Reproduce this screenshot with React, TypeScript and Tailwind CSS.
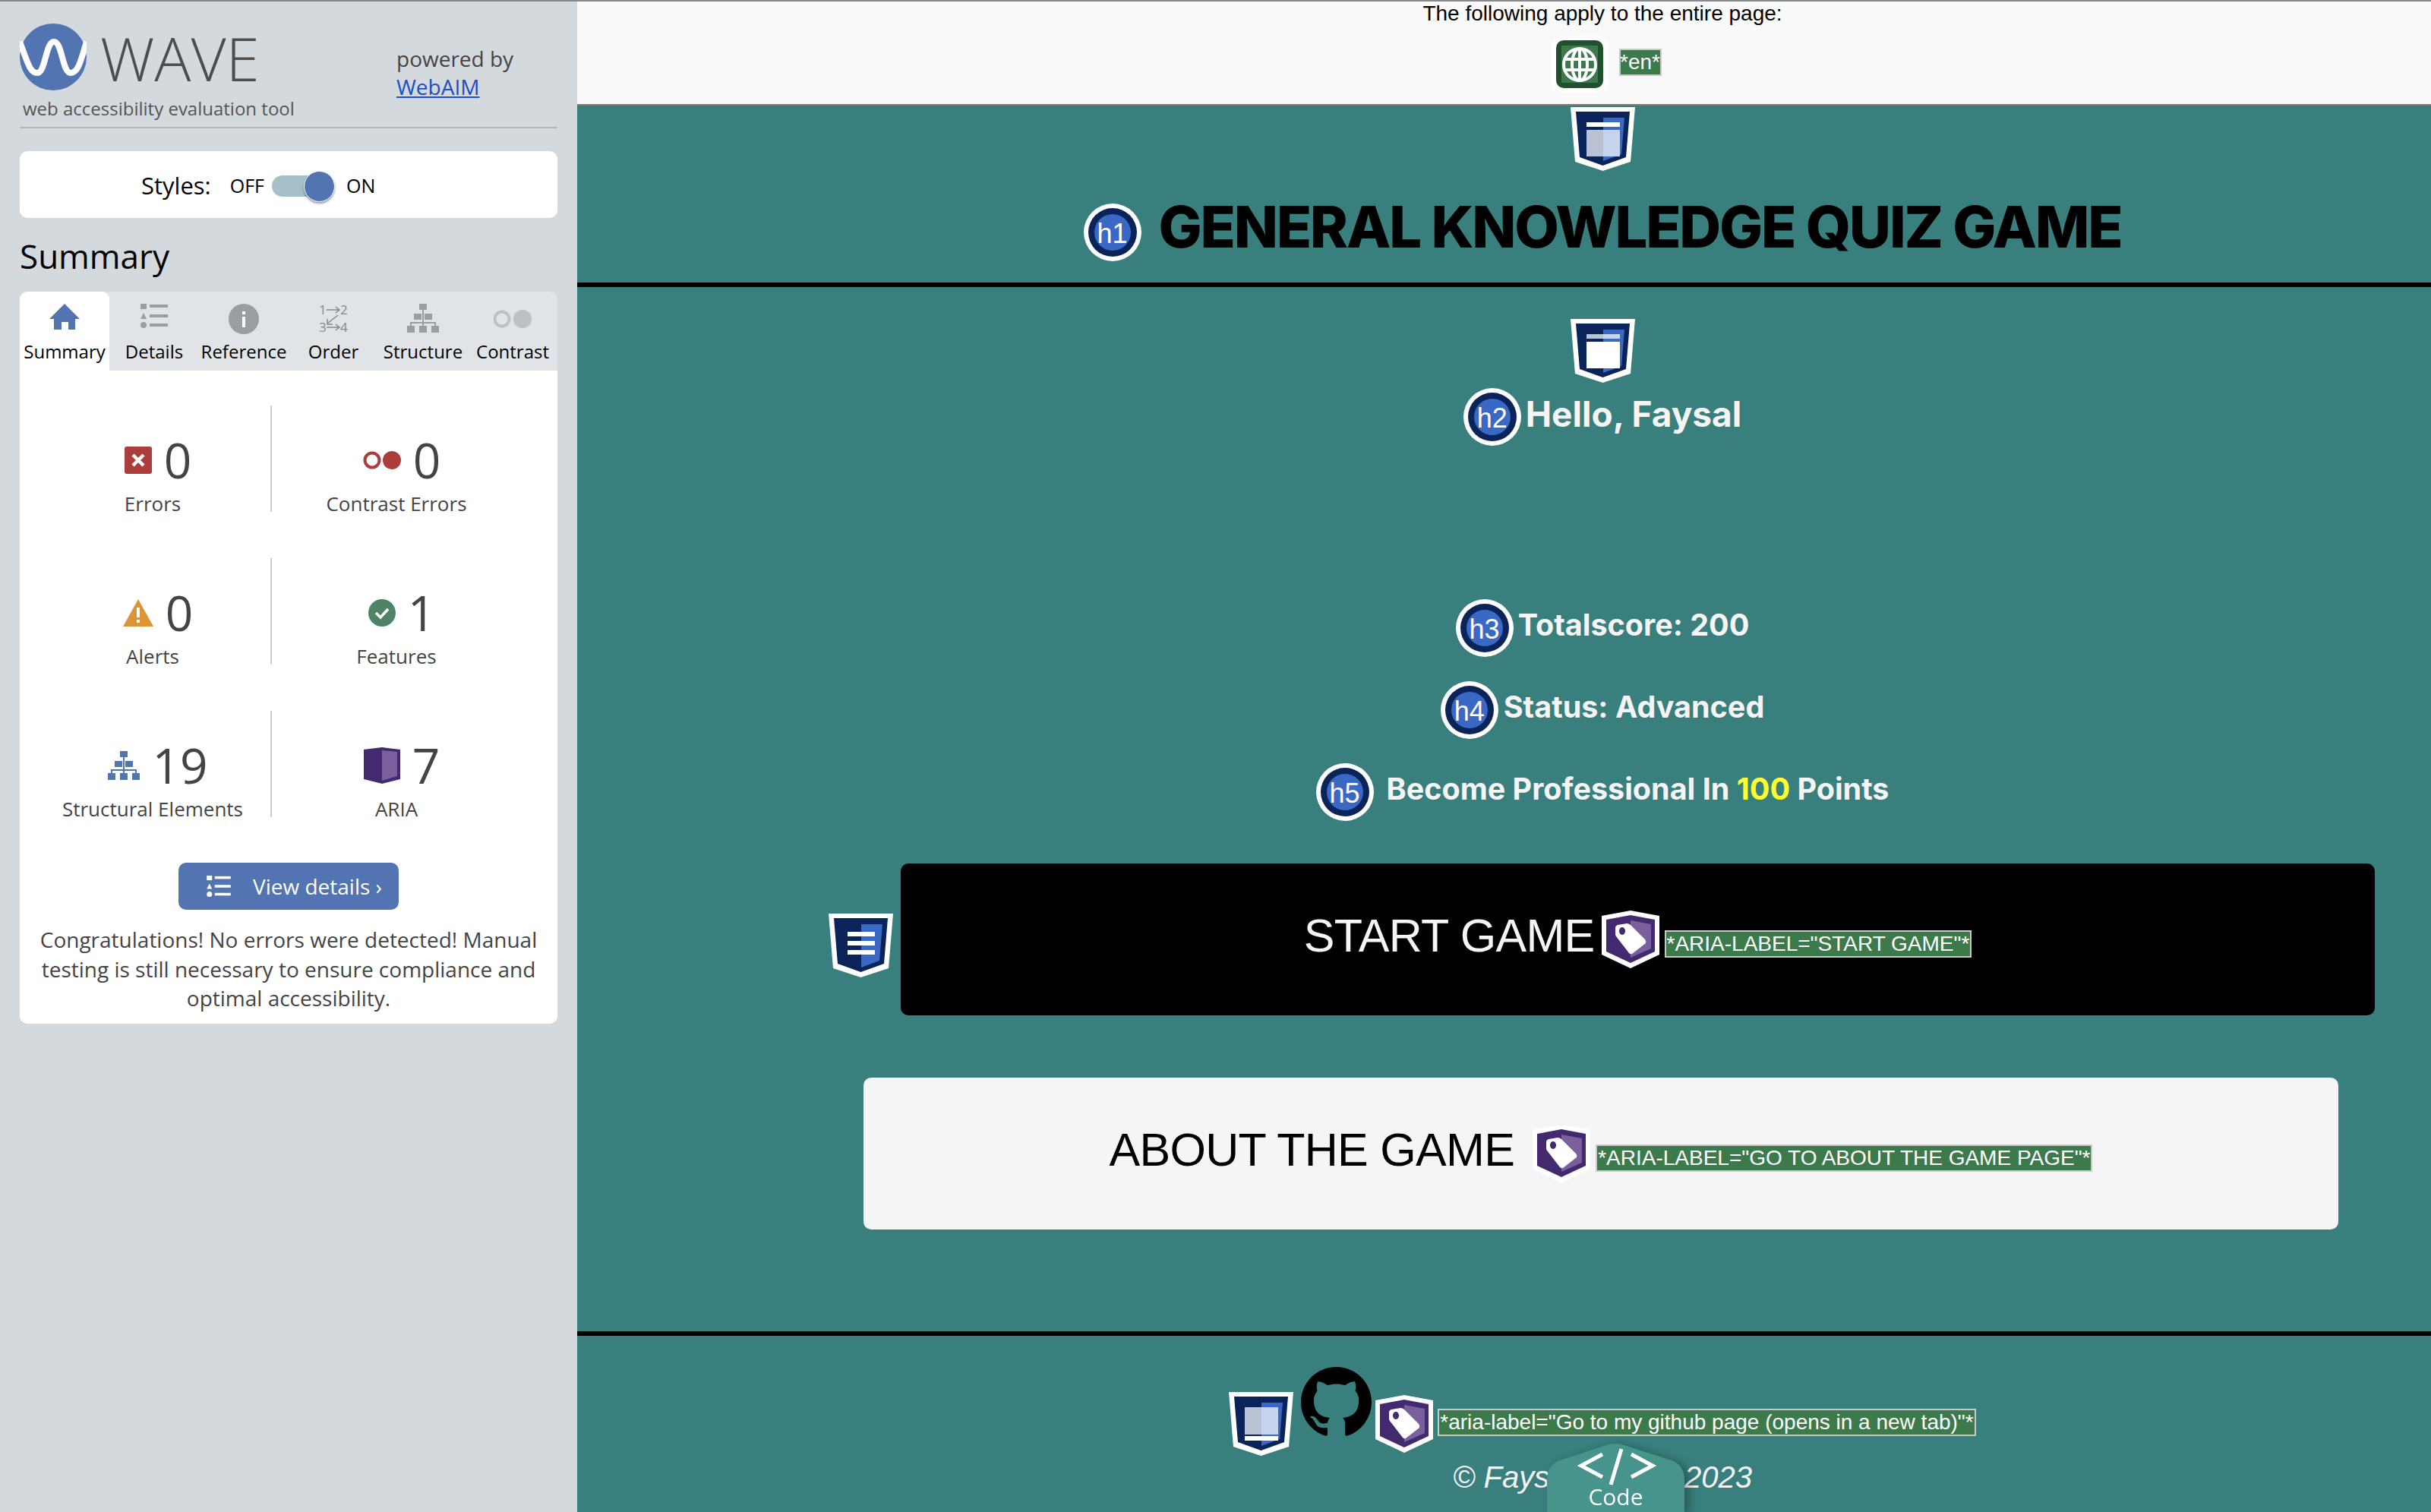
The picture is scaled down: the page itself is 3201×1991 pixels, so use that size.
import { BsGithub } from 'react-icons/bs';

const STATS = [
  { icon: 'error', value: '0', label: 'Errors' },
  { icon: 'contrast', value: '0', label: 'Contrast Errors' },
  { icon: 'alert', value: '0', label: 'Alerts' },
  { icon: 'feature', value: '1', label: 'Features' },
  { icon: 'structure', value: '19', label: 'Structural Elements' },
  { icon: 'aria', value: '7', label: 'ARIA' },
];

function StructureGlyph({ className, fill }: { className: string; fill: string }) {
  return (
    <svg className={className} viewBox="0 0 42 38" fill={fill}>
      <rect x="16" y="0" width="10" height="8" />
      <rect x="9" y="13" width="10" height="8" />
      <rect x="23" y="13" width="10" height="8" />
      <rect x="0" y="29" width="10" height="9" />
      <rect x="16" y="29" width="10" height="9" />
      <rect x="32" y="29" width="10" height="9" />
      <rect x="20" y="8" width="2" height="21" />
      <rect x="5" y="24" width="32" height="2" />
      <rect x="4" y="24" width="2" height="5" />
      <rect x="36" y="24" width="2" height="5" />
    </svg>
  );
}

function ListGlyph({ className, fill }: { className: string; fill: string }) {
  return (
    <svg className={className} viewBox="0 0 36 32" fill={fill}>
      <rect x="0" y="0" width="8" height="7" />
      <path d="M4 12 L8 20 L0 20 Z" />
      <ellipse cx="4" cy="28" rx="4" ry="4" />
      <rect x="12" y="1" width="24" height="4" />
      <rect x="12" y="14" width="24" height="4" />
      <rect x="12" y="26" width="24" height="4" />
    </svg>
  );
}

function StatIcon({ name }: { name: string }) {
  if (name === 'error')
    return (
      <svg className="w-[36px] h-[36px]" viewBox="0 0 36 36">
        <rect width="36" height="36" rx="3" fill="#ab3d3b" />
        <path d="M11 11 L25 25 M25 11 L11 25" stroke="#fff" strokeWidth="4.5" />
      </svg>
    );
  if (name === 'contrast')
    return (
      <svg className="w-[50px] h-[26px]" viewBox="0 0 50 26">
        <circle cx="12" cy="13" r="9.5" fill="none" stroke="#ab3d3b" strokeWidth="4" />
        <ellipse cx="38" cy="13" rx="12" ry="12" fill="#ab3d3b" />
      </svg>
    );
  if (name === 'alert')
    return (
      <svg className="w-[40px] h-[36px]" viewBox="0 0 40 36">
        <path d="M20 0 L40 36 L0 36 Z" fill="#da9534" />
        <rect x="18" y="11" width="4" height="13" fill="#fff" />
        <rect x="18" y="27" width="4" height="4" fill="#fff" />
      </svg>
    );
  if (name === 'feature')
    return (
      <svg className="w-[36px] h-[36px]" viewBox="0 0 36 36">
        <circle cx="18" cy="18" r="18" fill="#4d8465" />
        <path d="M10 18 L16 24 L26 13" fill="none" stroke="#fff" strokeWidth="3.5" />
      </svg>
    );
  if (name === 'structure') return <StructureGlyph className="w-[42px] h-[38px]" fill="#5274b1" />;
  return (
    <svg className="w-[48px] h-[48px]" viewBox="0 0 48 48">
      <path d="M0 3 L24 0 L48 3 L48 42 L24 48 L0 42 Z" fill="#43296d" />
      <path d="M24 4 L44 6 L44 38 L24 44 Z" fill="#7a5f9e" />
    </svg>
  );
}

function Shield({ kind }: { kind: 'header' | 'section' | 'nav' | 'footer' }) {
  return (
    <svg className="w-[85px] h-[84px] shrink-0" viewBox="0 0 85 84">
      <path d="M0 0 H85 L79 72 L42.5 84 L6 72 Z" fill="#fff" />
      <path d="M7 6 H78 L73 66 L42.5 77 L12 66 Z" fill="#0a2459" />
      <path d="M43 14 H71 L67 62 L43 71 Z" fill="#3a68c5" />
      {kind === 'header' && (
        <>
          <rect x="21" y="20" width="44" height="6" fill="#fff" />
          <rect x="21" y="30" width="22" height="35" fill="#b9c1d2" />
          <rect x="43" y="30" width="22" height="35" fill="#c6d4ee" />
        </>
      )}
      {kind === 'section' && (
        <>
          <rect x="21" y="20" width="22" height="6" fill="#b9c1d2" />
          <rect x="43" y="20" width="22" height="6" fill="#c6d4ee" />
          <rect x="21" y="30" width="44" height="35" fill="#fff" />
        </>
      )}
      {kind === 'nav' && (
        <>
          <rect x="25" y="24" width="36" height="6" fill="#fff" />
          <rect x="25" y="36" width="36" height="6" fill="#fff" />
          <rect x="25" y="48" width="36" height="6" fill="#fff" />
        </>
      )}
      {kind === 'footer' && (
        <>
          <rect x="21" y="20" width="22" height="36" fill="#b9c1d2" />
          <rect x="43" y="20" width="22" height="36" fill="#c6d4ee" />
          <rect x="21" y="58" width="44" height="6" fill="#fff" />
        </>
      )}
    </svg>
  );
}

function TagShield() {
  return (
    <svg className="w-[76px] h-[76px] shrink-0" viewBox="0 0 76 76">
      <path d="M38 0 L76 7 V58 L38 76 L0 58 V7 Z" fill="#fff" />
      <path d="M38 6 L70 12 V54 L38 69 L6 54 V12 Z" fill="#43296d" />
      <path d="M38 13 L65 18 V50 L38 62 Z" fill="#7a5f9e" />
      <path d="M18 23 Q18 20 21 19 L33 17 Q36 17 38 19 L57 38 Q59 40 58 43 L40 57 Q38 58 36 56 L19 34 Q18 33 18 31 Z" fill="#fff" />
      <ellipse cx="27" cy="27" rx="4" ry="5" fill="#43296d" />
    </svg>
  );
}

function HeadingBadge({ level }: { level: string }) {
  return (
    <div className="w-[76px] h-[76px] shrink-0 rounded-full bg-white p-[6px]">
      <div className="w-full h-full rounded-full bg-[#0a2459] p-[8px]">
        <div className="w-full h-full rounded-full bg-[#3a68c5] flex items-center justify-center text-white font-['Liberation_Sans',sans-serif] text-[36px] leading-none pt-[4px]">
          {level}
        </div>
      </div>
    </div>
  );
}

function AriaLabel({ text, className = '' }: { text: string; className?: string }) {
  return (
    <span className={`h-[36px] shrink-0 flex items-center justify-center whitespace-nowrap bg-[#3c7a4c] border-2 border-[#c9c9c9] text-white font-['Liberation_Sans',sans-serif] text-[28px] leading-none ${className}`}>
      {text}
    </span>
  );
}

function Sidebar() {
  return (
    <aside className="w-[760px] shrink-0 h-full bg-[#d4d9dd] border-t-2 border-[#85888c] px-[26px] font-['Open_Sans',sans-serif]">
      <div className="relative h-[167px] border-b-2 border-[#b1b5b8]">
        <div className="flex items-start pt-[29px]">
          <svg className="w-[88px] h-[88px] shrink-0" viewBox="0 0 88 88">
            <circle cx="44" cy="44" r="44" fill="#5274b1" />
            <path d="M0 24 C10 50 13 65 23 65 C34 65 34 24 45 24 C56 24 56 65 67 65 C77 65 80 50 88 24" fill="none" stroke="#fff" strokeWidth="8" />
          </svg>
          <span className="ml-[18px] mt-[0px] text-[80px] leading-[90px] font-light text-[#4d4d4d]">WAVE</span>
          <div className="ml-auto mr-[40px] mt-[28px] w-[172px] text-[28px] leading-[37px] text-[#444] whitespace-nowrap">
            <div>powered by</div>
            <div className="text-[#1c4fc4] underline">WebAIM</div>
          </div>
        </div>
        <div className="ml-[4px] text-[24px] leading-[34px] text-[#555] whitespace-nowrap absolute top-[124px]">web accessibility evaluation tool</div>
      </div>

      <div className="mt-[30px] h-[88px] bg-white rounded-[10px] flex items-center pl-[160px] pt-[3px] text-black">
        <span className="text-[31px] leading-none">Styles:</span>
        <span className="ml-[25px] text-[25px] leading-none">OFF</span>
        <div className="relative ml-[10px] w-[72px] h-[28px] rounded-full bg-[#a6c0ca]">
          <div className="absolute right-[-11px] top-[-6px] w-[41px] h-[41px] rounded-full bg-[#5274b1] border border-white shadow-[0_2px_3px_rgba(0,0,0,0.4)]" />
        </div>
        <span className="ml-[26px] text-[25px] leading-none">ON</span>
      </div>

      <h2 className="mt-[20px] text-[44px] leading-[60px] text-black">Summary</h2>

      <div className="mt-[17px] grid grid-cols-6 h-[104px] bg-[#e0e4e7] rounded-t-[10px] text-black text-[24px]">
        <div className="bg-white rounded-t-[10px] flex flex-col items-center pt-[16px]">
          <svg className="w-[40px] h-[34px]" viewBox="0 0 40 34" fill="#5274b1">
            <path d="M20 0 L40 20 H34 V34 H25 V24 H16 V34 H6 V20 H0 Z" />
          </svg>
          <span className="mt-[12px] leading-[34px]">Summary</span>
        </div>
        <div className="flex flex-col items-center pt-[16px]">
          <div className="h-[34px]"><ListGlyph className="w-[36px] h-[32px]" fill="#999ea3" /></div>
          <span className="mt-[12px] leading-[34px]">Details</span>
        </div>
        <div className="flex flex-col items-center pt-[16px]">
          <div className="h-[34px]">
            <svg className="w-[40px] h-[40px]" viewBox="0 0 40 40">
              <circle cx="20" cy="20" r="20" fill="#999ea3" />
              <rect x="18" y="17" width="4" height="14" fill="#fff" />
              <rect x="18" y="10" width="4" height="4" fill="#fff" />
            </svg>
          </div>
          <span className="mt-[12px] leading-[34px]">Reference</span>
        </div>
        <div className="flex flex-col items-center pt-[16px]">
          <div className="h-[34px]">
            <svg className="w-[38px] h-[38px] overflow-visible" viewBox="0 0 38 38" fill="#85898d" fontFamily="'Open Sans', sans-serif" fontSize="17">
              <text x="0" y="14">1</text>
              <text x="28" y="14">2</text>
              <text x="0" y="37">3</text>
              <text x="28" y="37">4</text>
              <path d="M10 8 H26 M22 4 L27 8 L22 12 M25 15 L11 26 M11 20 V27 H18 M10 31 H26 M22 27 L27 31 L22 35" fill="none" stroke="#85898d" strokeWidth="1.5" />
            </svg>
          </div>
          <span className="mt-[12px] leading-[34px]">Order</span>
        </div>
        <div className="flex flex-col items-center pt-[16px]">
          <div className="h-[34px]"><StructureGlyph className="w-[42px] h-[38px]" fill="#999ea3" /></div>
          <span className="mt-[12px] leading-[34px]">Structure</span>
        </div>
        <div className="flex flex-col items-center pt-[16px]">
          <div className="h-[34px] flex items-center pt-[6px]">
            <svg className="w-[50px] h-[24px]" viewBox="0 0 50 24">
              <circle cx="11" cy="12" r="9.5" fill="none" stroke="#bdc1c4" strokeWidth="4" />
              <circle cx="38" cy="12" r="12" fill="#bdc1c4" />
            </svg>
          </div>
          <span className="mt-[12px] leading-[34px]">Contrast</span>
        </div>
      </div>

      <div className="h-[860px] bg-white rounded-b-[10px] pt-[46px] text-[#444]">
        <div className="grid grid-cols-[332px_376px] gap-y-[61px]">
          {STATS.map((s, i) => (
            <div
              key={s.label}
              className={`h-[140px] flex flex-col items-center pt-[40px] ${i % 2 === 0 ? 'pl-[20px] border-r-2 border-[#ccc]' : 'pr-[48px]'}`}
            >
              <div className="h-[70px] flex items-center gap-[16px] pl-[14px]">
                <StatIcon name={s.icon} />
                <span className="text-[64px] leading-none">{s.value}</span>
              </div>
              <span className="mt-[11px] text-[26px] leading-[28px] whitespace-nowrap">{s.label}</span>
            </div>
          ))}
        </div>
        <div className="mt-[60px] mx-auto w-[290px] h-[62px] rounded-[10px] bg-[#5274b1] text-white flex items-center pl-[35px]">
          <ListGlyph className="w-[36px] h-[28px]" fill="#fff" />
          <span className="ml-[27px] text-[28px] leading-none">View details ›</span>
        </div>
        <p className="mt-[20px] px-[20px] text-center text-[28px] leading-[38.5px]">
          Congratulations! No errors were detected! Manual testing is still necessary to ensure compliance and optimal accessibility.
        </p>
      </div>
    </aside>
  );
}

function Main() {
  const headingText = "font-['Inter',sans-serif] font-bold text-[#f5f5f5] whitespace-nowrap";
  return (
    <main className="relative flex-1 min-w-0 h-full overflow-hidden bg-[#387f7d]">
      <div className="w-[2441px] overflow-hidden">
        <div className="h-[139px] bg-[#f9f9f9] border-t-2 border-b-2 border-t-[#85888c] border-b-[#7d7d75]">
          <div className="w-[2700px] flex flex-col items-center text-black font-['Liberation_Sans',sans-serif]">
            <div className="text-[28px] leading-[32px]">The following apply to the entire page:</div>
            <div className="mt-[13px] ml-[10px] flex items-center gap-[15px]">
              <div className="w-[74px] h-[75px] rounded-[14px] bg-white p-[6px]">
                <div className="w-full h-full rounded-[10px] bg-[#20502d] p-[7px]">
                  <div className="w-full h-full bg-[#3c7a4c] flex items-center justify-center">
                    <svg className="w-[46px] h-[46px]" viewBox="0 0 46 46" fill="none" stroke="#fff" strokeWidth="4">
                      <circle cx="23" cy="23" r="21" />
                      <ellipse cx="23" cy="23" rx="10" ry="21" />
                      <path d="M3 16 H43 M3 30 H43 M23 2 V44" />
                    </svg>
                  </div>
                </div>
              </div>
              <AriaLabel text="*en*" className="w-[56px] mb-[5px]" />
            </div>
          </div>
        </div>

        <div className="w-[2700px]">
          <div className="mt-[2px] flex justify-center"><Shield kind="header" /></div>
          <div className="mt-[43px] flex items-center justify-center gap-[23px]">
            <HeadingBadge level="h1" />
            <h1 className="font-['Inter',sans-serif] font-extrabold text-[76px] leading-[60px] tracking-[-2.2px] text-black whitespace-nowrap mb-[16px]">GENERAL KNOWLEDGE QUIZ GAME</h1>
          </div>
        </div>
        <div className="mt-[28px] h-[6px] bg-black" />

        <div className="w-[2700px]">
          <div className="mt-[42px] flex justify-center"><Shield kind="section" /></div>
          <div className="mt-[7px] flex items-center justify-center gap-[6px]">
            <HeadingBadge level="h2" />
            <h2 className={`${headingText} text-[46px] leading-none pb-[8px]`}>Hello, Faysal</h2>
          </div>
          <div className="mt-[202px] flex items-center justify-center gap-[6px]">
            <HeadingBadge level="h3" />
            <h3 className={`${headingText} text-[39.5px] leading-none pb-[6px]`}>Totalscore: 200</h3>
          </div>
          <div className="mt-[32px] flex items-center justify-center gap-[7px]">
            <HeadingBadge level="h4" />
            <h4 className={`${headingText} text-[39.5px] leading-none pb-[6px]`}>Status: Advanced</h4>
          </div>
          <div className="mt-[32px] flex items-center justify-center gap-[17px]">
            <HeadingBadge level="h5" />
            <h5 className={`${headingText} text-[39.5px] leading-none pb-[6px]`}>
              Become Professional In <span className="text-[#ffff33]">100</span> Points
            </h5>
          </div>

          <div className="mt-[56px] mr-[2px] flex justify-center items-center gap-[10px] font-['Liberation_Sans',sans-serif]">
            <div className="mt-[16px]"><Shield kind="nav" /></div>
            <div className="w-[1941px] h-[200px] rounded-[10px] bg-black flex items-center justify-center">
              <span className="text-[61px] leading-none tracking-[-0.7px] text-[#f5f5f5] whitespace-nowrap mb-[9px]">START GAME</span>
              <span className="ml-[9px]"><TagShield /></span>
              <AriaLabel text={'*ARIA-LABEL="START GAME"*'} className="ml-[7px] mt-[11px] px-[1px]" />
            </div>
          </div>

          <div className="mt-[82px] mr-[4px] flex justify-center font-['Liberation_Sans',sans-serif]">
            <div className="w-[1942px] h-[200px] rounded-[10px] bg-[#f5f5f5] flex items-center justify-center">
              <span className="text-[61px] leading-none tracking-[-0.7px] text-black whitespace-nowrap mb-[9px]">ABOUT THE GAME</span>
              <span className="ml-[24px]"><TagShield /></span>
              <AriaLabel text={'*ARIA-LABEL="GO TO ABOUT THE GAME PAGE"*'} className="ml-[7px] mt-[11px] px-[1px]" />
            </div>
          </div>
        </div>

        <div className="mt-[134px] h-[6px] bg-black" />

        <div className="w-[2700px] font-['Liberation_Sans',sans-serif]">
          <div className="mt-[41px] flex justify-center items-start">
            <div className="mt-[33px]"><Shield kind="footer" /></div>
            <BsGithub className="ml-[10px] w-[93px] h-[93px] text-black shrink-0" />
            <div className="ml-[5px] mt-[37px]"><TagShield /></div>
            <AriaLabel text={'*aria-label="Go to my github page (opens in a new tab)"*'} className="ml-[6px] mt-[55px] px-[1px]" />
          </div>
          <div className="mt-[4px] mx-auto w-[394px] flex justify-between italic text-[40px] leading-[48px] text-[#f5f5f5]">
            <span>© Fays</span>
            <span>2023</span>
          </div>
        </div>
      </div>

      <div className="absolute left-[1277px] bottom-0 w-[181px] h-[91px] drop-shadow-[6px_2px_6px_rgba(0,0,0,0.3)]">
        <svg className="absolute inset-0 w-full h-full" viewBox="0 0 181 91">
          <path d="M0 91 V48 Q0 32 14 24 L78 3 Q90 -1 102 3 L167 24 Q181 32 181 48 V91 Z" fill="#46948c" />
          <path d="M73 15 L45 30 L73 45 M98 8 L84 55 M111 15 L139 30 L111 45" fill="none" stroke="#fff" strokeWidth="5" />
        </svg>
        <div className="relative pt-[54px] text-center text-white font-['Open_Sans',sans-serif] text-[30px] leading-[34px]">Code</div>
      </div>
    </main>
  );
}

export default function App() {
  return (
    <div className="w-[3201px] h-[1991px] flex overflow-hidden">
      <Sidebar />
      <Main />
    </div>
  );
}
